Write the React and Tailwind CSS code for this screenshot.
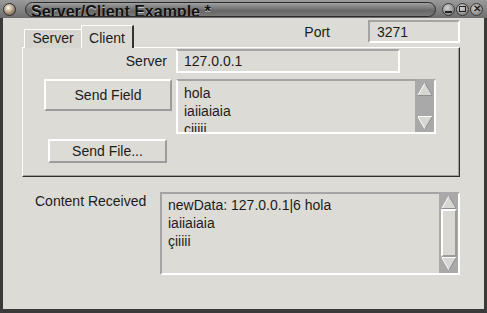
import React from 'react';

// GTK1-ish bevels
const sunkenL = 'border-2 border-t-[#a4a4a4] border-l-[#a4a4a4] border-r-white border-b-white';
const sunkenW = 'border-2 border-t-[#a4a4a4] border-l-white border-r-white border-b-white';
const raised = 'border-2 border-t-white border-l-white border-r-[#9c9c9c] border-b-[#9c9c9c]';

const Arrow = ({ up }) => (
  <svg width="16" height="14" viewBox="0 0 16 14">
    {up ? (
      <>
        <polygon points="8,1 15,13 1,13" fill="#d6d6d2" />
        <line x1="1" y1="13" x2="8" y2="1" stroke="#ffffff" strokeWidth="1" />
        <line x1="8" y1="1" x2="15" y2="13" stroke="#8e8e8e" strokeWidth="1" />
        <line x1="1" y1="13.5" x2="15" y2="13.5" stroke="#8e8e8e" strokeWidth="1" />
      </>
    ) : (
      <>
        <polygon points="1,1 15,1 8,13" fill="#d6d6d2" />
        <line x1="1" y1="0.5" x2="15" y2="0.5" stroke="#ffffff" strokeWidth="1" />
        <line x1="1" y1="1" x2="8" y2="13" stroke="#ffffff" strokeWidth="1" />
        <line x1="8" y1="13" x2="15" y2="1" stroke="#8e8e8e" strokeWidth="1" />
      </>
    )}
  </svg>
);

const Scrollbar = ({ thumb }) => (
  <div className="w-[19px] -mt-[2px] bg-[#a9a9a9] flex flex-col items-center pt-[3px] pb-[2px]">
    <Arrow up />
    {thumb ? (
      <div className={`w-[16px] flex-1 bg-[#d9d9d4] ${raised}`} />
    ) : (
      <div className="flex-1" />
    )}
    <Arrow />
  </div>
);

const WinButton = ({ children }) => (
  <div className="w-[13px] h-[13px] rounded-full border border-[#3a3a3a] bg-[radial-gradient(circle_at_40%_35%,#d4d4d4_0%,#9a9a9a_55%,#6a6a6a_100%)] flex items-center justify-center">
    {children}
  </div>
);

const TitleBar = () => (
  <div className="h-[18px] shrink-0 flex items-center bg-[linear-gradient(#9a9a9a,#6e6e6e)] pl-[3px] pr-[4px]">
    <div className="w-[13px] h-[13px] rounded-full border border-[#2e2e2e] bg-[radial-gradient(circle_at_40%_35%,#ffffff_0%,#d8c8b0_25%,#8a7560_70%,#4a3e32_100%)]" />
    <div className="ml-[9px] w-[411px] h-[15px] rounded-full border border-[#2c2c2c] bg-[linear-gradient(#a0a0a0,#666666_60%,#7a7a7a)] overflow-hidden flex items-end pl-[5px]">
      <span className="text-[16px] leading-[16px] font-bold text-[#111] [text-shadow:0_1px_0_#c8c8c8] translate-y-[4px]">
        Server/Client Example *
      </span>
    </div>
    <div className="ml-auto flex gap-[1px]">
      <WinButton>
        <div className="w-[7px] h-[2px] bg-[#222] mt-[5px]" />
      </WinButton>
      <WinButton>
        <div className="w-[7px] h-[6px] border-[1.5px] border-[#222]" />
      </WinButton>
      <WinButton>
        <span className="text-[10px] leading-[10px] font-bold text-[#222]">✕</span>
      </WinButton>
    </div>
  </div>
);

export default function App() {
  return (
    <div className="w-[487px] h-[313px] bg-[#3a3a3a] flex flex-col overflow-hidden font-['Liberation_Sans',Arial,sans-serif] text-[14px] leading-[18px] text-[#1c1c1c]">
      <TitleBar />
      <div className="flex-1 ml-[3px] mr-[3px] mb-[4px] bg-[#dcdbd5] flex flex-col">
        {/* tabs + port */}
        <div className="h-[29px] shrink-0 flex">
          <div className="self-end flex items-end ml-[21px] -mb-px relative z-10">
            <div className="w-[57px] h-[19px] border-t border-l border-white bg-[#d6d5cf] flex justify-center leading-[16px]">
              Server
            </div>
            <div className="w-[53px] h-[23px] border-t border-l border-white border-r-2 border-r-[#333] bg-[#dcdbd5] flex justify-center pt-[4px] leading-[16px]">
              Client
            </div>
          </div>
          <div className="flex-1" />
          <div className="self-start mt-[2px] mr-[24px] flex items-center">
            <span>Port</span>
            <div className={`ml-[38px] w-[92px] h-[23px] ${sunkenL} flex items-center pl-[7px]`}>3271</div>
          </div>
        </div>

        {/* tab pane */}
        <div className="ml-[19px] w-[438px] h-[130px] shrink-0 border-l border-t border-white border-r border-b border-r-[#303030] border-b-[#303030] shadow-[inset_-1px_-1px_0_#a0a0a0] flex flex-col">
          <div className="mt-[1px] h-[24px] flex items-center">
            <div className="w-[144px] text-right">Server</div>
            <div className={`ml-[9px] w-[224px] h-full ${sunkenW} flex items-center pl-[6px]`}>127.0.0.1</div>
          </div>
          <div className="mt-[6px] flex items-start">
            <div className={`ml-[21px] w-[128px] h-[32px] ${raised} flex items-center justify-center`}>Send Field</div>
            <div className={`ml-[4px] w-[260px] h-[55px] ${sunkenW} flex`}>
              <div className="flex-1 pl-[6px] pt-[3px] overflow-hidden">
                <div>hola</div>
                <div>iaiiaiaia</div>
                <div>ciiiii</div>
              </div>
              <Scrollbar />
            </div>
          </div>
          <div className={`mt-[5px] ml-[25px] w-[119px] h-[24px] ${raised} flex items-center justify-center`}>Send File...</div>
        </div>

        {/* received */}
        <div className="mt-[15px] flex items-start">
          <div className="ml-[32px] w-[125px]">Content Received</div>
          <div className={`w-[300px] h-[83px] ${sunkenL} flex`}>
            <div className="flex-1 pl-[6px] pt-[2px] overflow-hidden">
              <div>newData: 127.0.0.1|6 hola</div>
              <div>iaiiaiaia</div>
              <div>çiiiii</div>
            </div>
            <Scrollbar thumb />
          </div>
        </div>
      </div>
    </div>
  );
}
